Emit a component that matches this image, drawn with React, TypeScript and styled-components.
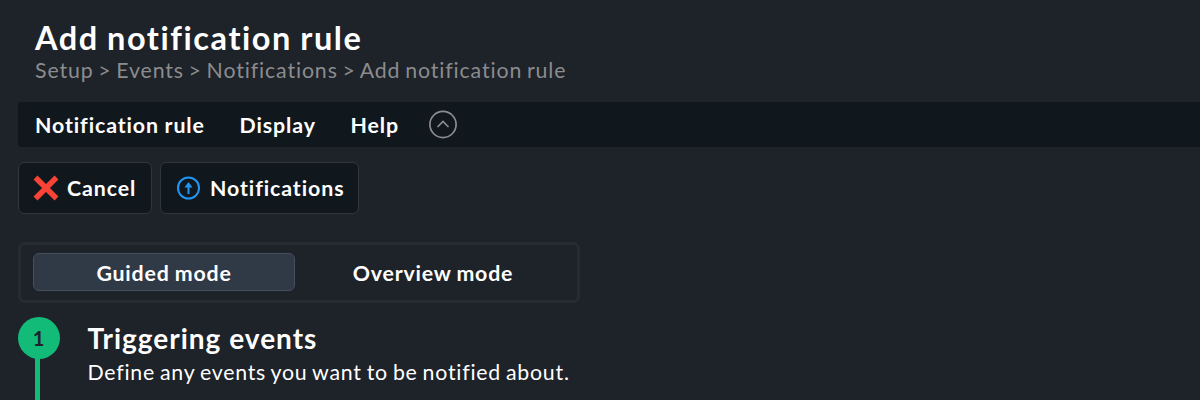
import React from 'react';
import styled, { createGlobalStyle, css } from 'styled-components';

const Global = createGlobalStyle`
  * { box-sizing: border-box; }
  body { margin: 0; background: #1e2229; color: #fff; font-family: Lato, sans-serif; overflow: hidden; }
`;
const Page = styled.main`height: 400px; padding-left: 18px; overflow: hidden; display: flex; flex-direction: column;`;
const Header = styled.header`height: 102px; flex: none; padding: 18px 0 0 17px;`;
const Title = styled.h1`margin: 0; font-size: 32.5px; line-height: 40px; font-weight: 700; letter-spacing: 1.56px; word-spacing: -1.2px;`;
const Crumbs = styled.nav`font-size: 21.33px; line-height: 24px; letter-spacing: 0.87px; word-spacing: -1.6px; color: #8b8c8e;`;
const MenuBar = styled.nav`height: 45px; flex: none; padding-left: 17px; display: flex; align-items: center; background: #11181d; border-radius: 3px 0 0 3px;`;
const MenuItem = styled.span`margin: 0 34.7px 0 0; font-size: 21.33px; line-height: 26px; font-weight: 700; letter-spacing: 0.9px; word-spacing: -0.5px; white-space: nowrap;`;
const Collapse = styled.svg`margin-left: -6px;`;
const Actions = styled.div`display: flex; gap: 8px; margin-top: 15px; height: 52px; flex: none;`;
const Action = styled.button<{ $width: number }>`
  width: ${p => p.$width}px; height: 52px; padding: 0 0 0 14px; display: flex; align-items: center; gap: 8px;
  background: #11181d; border: 1px solid #303640; border-radius: 6px; color: #fff;
  font: 700 21.33px/26px Lato, sans-serif; letter-spacing: 0.92px;
`;
const Modes = styled.div`width: 562px; height: 61px; flex: none; margin-top: 28px; padding: 8px 12px; display: flex; border: 3px solid #272b33; border-radius: 7px;`;
const Mode = styled.button<{ $active?: boolean }>`
  width: 262px; height: 38px; flex: none; padding: 2px 0 0; margin-right: 7px; border: 1px solid transparent; border-radius: 6px; background: none; color: #fff;
  font: 700 21.33px/26px Lato, sans-serif; letter-spacing: 0.8px; word-spacing: -0.8px;
  ${p => p.$active && css`background: #303946; border-color: #454e5a;`}
`;
const Step = styled.section`display: flex; gap: 27.5px; margin-top: 14px;`;
const Track = styled.div`width: 42px; height: 84px; flex: none; display: flex; flex-direction: column;`;
const Num = styled.div`width: 42px; height: 42px; flex: none; padding-right: 1px; border-radius: 50%; background: #13bb79; color: #1e2229; font-size: 20px; font-weight: 700; display: flex; align-items: center; justify-content: center;`;
const Line = styled.div`width: 5px; flex: 1; margin: -1px 0 0 17px; background: #13bb79;`;
const StepTitle = styled.h2`margin: 3px 0 0; font-size: 28px; line-height: 36px; letter-spacing: 1px;`;
const StepText = styled.p`margin: 2px 0 0; font-size: 21.33px; line-height: 28px; letter-spacing: 0.75px; word-spacing: -1.2px;`;

export default function App() {
  return (
    <Page>
      <Global />
      <Header>
        <Title>Add notification rule</Title>
        <Crumbs>Setup &gt; Events &gt; Notifications &gt; Add notification rule</Crumbs>
      </Header>
      <MenuBar>
        <MenuItem>Notification rule</MenuItem>
        <MenuItem>Display</MenuItem>
        <MenuItem>Help</MenuItem>
        <Collapse width="30" height="30" viewBox="0 0 30 30" fill="none" stroke="#8b8c8e" strokeWidth="1.7">
          <circle cx="15" cy="14.5" r="13.1" /><path d="M9.5 17l5.5-5.5 5.5 5.5" />
        </Collapse>
      </MenuBar>
      <Actions>
        <Action $width={134}>
          <svg width="26" height="26" viewBox="0 0 26 26" stroke="#fa4337" strokeWidth="5.5"><path d="M2.5 2.5l21 21M23.5 2.5l-21 21" /></svg>
          Cancel
        </Action>
        <Action $width={199}>
          <svg width="27" height="26" viewBox="0 0 27 26" fill="none" stroke="#2196f3" strokeWidth="2"><circle cx="13.5" cy="13" r="10.5" /><path d="M13.5 19v-9" /><path d="M9.5 12.5l4-5.5 4 5.5z" fill="#2196f3" stroke="none" /></svg>
          Notifications
        </Action>
      </Actions>
      <Modes><Mode $active>Guided mode</Mode><Mode>Overview mode</Mode></Modes>
      <Step>
        <Track><Num>1</Num><Line /></Track>
        <div>
          <StepTitle>Triggering events</StepTitle>
          <StepText>Define any events you want to be notified about.</StepText>
        </div>
      </Step>
    </Page>
  );
}
